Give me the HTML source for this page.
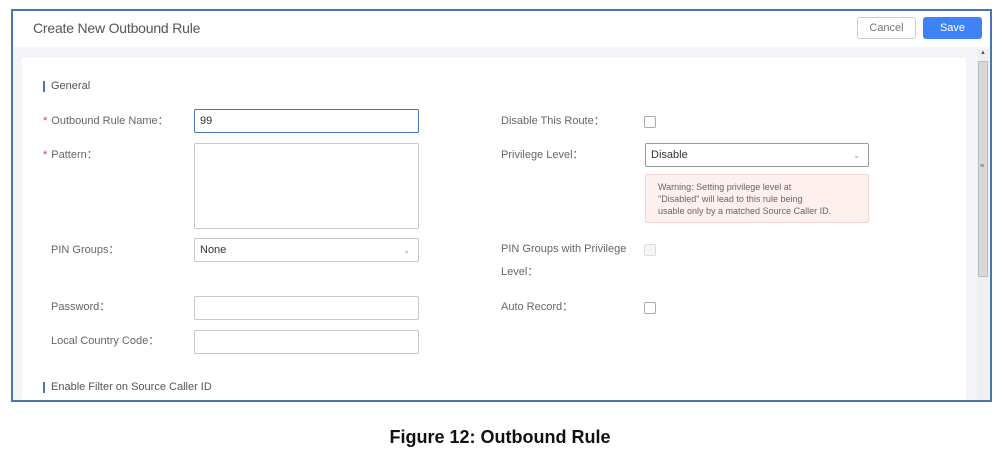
<!DOCTYPE html>
<html><head><style>
*{margin:0;padding:0;box-sizing:border-box}
body{width:1000px;height:457px;background:#fff;font-family:"Liberation Sans",sans-serif;position:relative;overflow:hidden}
.a{position:absolute}
.frame{left:11px;top:9px;width:981px;height:393px;border:2px solid #4a74b4;background:#f3f5f8;overflow:hidden}
.lbl{font-size:11px;color:#666;line-height:13px}
.star{color:#e33;margin-right:4px}
.box{border:1px solid #c8c8c8;background:#fff;border-radius:2px}
.cb{width:12px;height:12px;border:1px solid #aaa;border-radius:2px;background:#fff}
.sec{font-size:11px;color:#555;border-left:2px solid #4a74b4;padding-left:6px;line-height:11px}
.sel{font-size:11px;color:#333;padding-left:5px;line-height:23px}
.arr{position:absolute;right:8px;top:0;font-size:8px;color:#999}
</style></head><body>
<div class="a frame"></div>
<div class="a" style="left:13px;top:11px;width:977px;height:36px;background:#fff"></div>
<div class="a" style="left:33px;top:20px;font-size:14px;color:#555;letter-spacing:-0.2px">Create New Outbound Rule</div>
<div class="a" style="left:857px;top:17px;width:59px;height:22px;border:1px solid #ccc;border-radius:3px;background:#fff;font-size:11px;color:#777;text-align:center;line-height:20px">Cancel</div>
<div class="a" style="left:923px;top:17px;width:59px;height:22px;background:#3e82f7;border-radius:3px;font-size:11px;color:#fff;text-align:center;line-height:22px">Save</div>
<div class="a" style="left:22px;top:58px;width:944px;height:342px;background:#fff"></div>
<div class="a" style="left:977px;top:50px;width:12px;height:350px;background:#eef0f2"></div>
<div class="a" style="left:978px;top:61px;width:10px;height:216px;background:#d8d8d8;border:1px solid #bbb;border-radius:1px"></div>
<div class="a" style="left:980px;top:163px;font-size:7px;color:#666">≡</div>
<div class="a" style="left:980px;top:50px;font-size:6px;color:#555">▲</div>

<div class="a sec" style="left:43px;top:81px">General</div>
<div class="a lbl" style="left:43px;top:115px"><span class="star">*</span>Outbound Rule Name：</div>
<div class="a box" style="left:194px;top:109px;width:225px;height:24px;border-color:#4a74b4;font-size:11px;padding-left:5px;line-height:22px;color:#333">99</div>
<div class="a lbl" style="left:43px;top:149px"><span class="star">*</span>Pattern：</div>
<div class="a box" style="left:194px;top:143px;width:225px;height:86px"></div>
<div class="a lbl" style="left:51px;top:244px">PIN Groups：</div>
<div class="a box sel" style="left:194px;top:238px;width:225px;height:24px">None<span class="arr">⌄</span></div>
<div class="a lbl" style="left:51px;top:301px">Password：</div>
<div class="a box" style="left:194px;top:296px;width:225px;height:24px"></div>
<div class="a lbl" style="left:51px;top:335px">Local Country Code：</div>
<div class="a box" style="left:194px;top:330px;width:225px;height:24px"></div>

<div class="a lbl" style="left:501px;top:115px">Disable This Route：</div>
<div class="a cb" style="left:644px;top:116px"></div>
<div class="a lbl" style="left:501px;top:149px">Privilege Level：</div>
<div class="a box sel" style="left:645px;top:143px;width:224px;height:24px;border-color:#999">Disable<span class="arr">⌄</span></div>
<div class="a" style="left:645px;top:174px;width:224px;height:49px;background:#fdf0ef;border:1px solid #f6d6d4;border-radius:2px;font-size:9px;color:#666;padding:6px 0 0 12px;line-height:12px">Warning: Setting privilege level at<br>"Disabled" will lead to this rule being<br>usable only by a matched Source Caller ID.</div>
<div class="a lbl" style="left:501px;top:238px;line-height:23px">PIN Groups with Privilege<br>Level：</div>
<div class="a cb" style="left:644px;top:244px;border-color:#ddd;background:#f5f5f5"></div>
<div class="a lbl" style="left:501px;top:301px">Auto Record：</div>
<div class="a cb" style="left:644px;top:302px"></div>

<div class="a sec" style="left:43px;top:382px">Enable Filter on Source Caller ID</div>
<div class="a" style="left:0;top:427px;width:1000px;text-align:center;font-size:18px;font-weight:bold;color:#111">Figure 12: Outbound Rule</div>
</body></html>
